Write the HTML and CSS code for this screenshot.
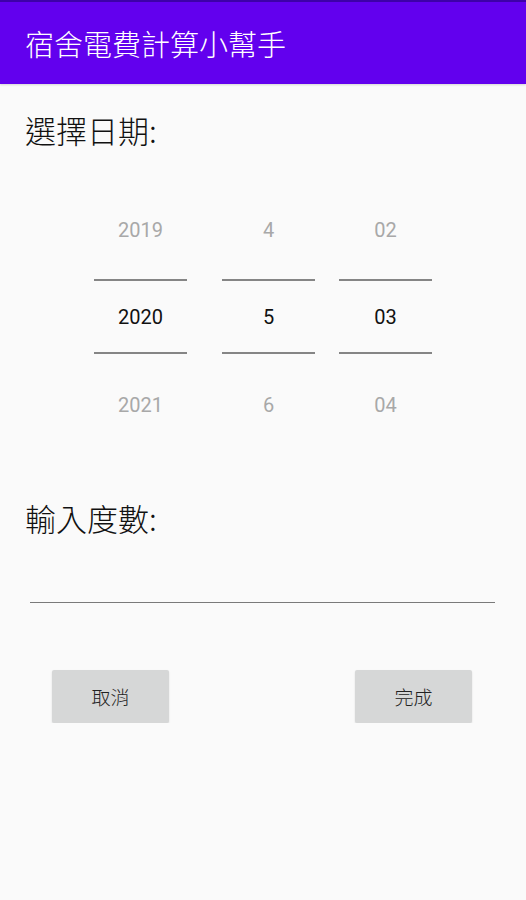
FILE: index.html
```html
<!DOCTYPE html>
<html lang="zh-Hant">
  <head>
    <meta charset="UTF-8" />
    <meta name="viewport" content="width=device-width, initial-scale=1.0" />
    <title>宿舍電費計算小幫手</title>
    <link rel="stylesheet" href="styles.css">
  </head>
  <body>
    <header class="appBar">
      <h1 class="appTitle">宿舍電費計算小幫手</h1>
    </header>

    <main class="content">
      <p class="label">選擇日期:</p>

      <div class="picker">
        <div class="pickerCol colYear">
          <div class="num">2019</div>
          <div class="divider"></div>
          <div class="num selected">2020</div>
          <div class="divider"></div>
          <div class="num last">2021</div>
        </div>
        <div class="pickerCol colMonth">
          <div class="num">4</div>
          <div class="divider"></div>
          <div class="num selected">5</div>
          <div class="divider"></div>
          <div class="num last">6</div>
        </div>
        <div class="pickerCol colDay">
          <div class="num">02</div>
          <div class="divider"></div>
          <div class="num selected">03</div>
          <div class="divider"></div>
          <div class="num last">04</div>
        </div>
      </div>

      <p class="label labelInput">輸入度數:</p>
      <div class="inputLine"></div>

      <div class="buttons">
        <button class="btn">取消</button>
        <button class="btn">完成</button>
      </div>
    </main>
  </body>
</html>
```

FILE: styles.css
```css
body {
  margin: 0;
  background-color: #fafafa;
  font-family: "Noto Sans CJK TC", "Noto Sans", sans-serif;
  color: #1e1e1e;
}

.appBar {
  height: 82px;
  border-top: 2px solid #3d00a8;
  background-color: #6200ee;
  display: flex;
  align-items: center;
  padding-left: 25px;
  box-shadow: 0 1px 2px rgba(0, 0, 0, 0.15);
}

.appTitle {
  margin: 0;
  font-size: 29px;
  font-weight: 300;
  color: #fff;
  line-height: 1;
}

.label {
  margin: 26px 0 0 25px;
  font-size: 31px;
  font-weight: 300;
  line-height: 40px;
  color: #111;
}

.picker {
  display: flex;
  margin-top: 60px;
  padding-left: 94px;
}

.pickerCol {
  width: 93px;
  display: flex;
  flex-direction: column;
  align-items: stretch;
}

.colMonth {
  margin-left: 35px;
}

.colDay {
  margin-left: 24px;
}

.num {
  height: 40px;
  line-height: 40px;
  text-align: center;
  font-family: Roboto, sans-serif;
  font-size: 20px;
  color: #a8a8a8;
}

.divider {
  height: 2px;
  background-color: #858585;
  margin-top: 29px;
}

.num.selected {
  height: 71px;
  line-height: 73px;
  color: #111;
}

.selected + .divider {
  margin-top: 0;
}

.num.last {
  margin-top: 31px;
}

.labelInput {
  margin-top: 73px;
}

.inputLine {
  margin: 64px 31px 0 30px;
  height: 1px;
  background-color: #7a7a7a;
}

.buttons {
  display: flex;
  justify-content: space-between;
  margin: 67px 54px 0 52px;
}

.btn {
  width: 117px;
  height: 53px;
  border: none;
  border-radius: 2px;
  background-color: #d6d7d7;
  box-shadow: 0 1px 2px rgba(0, 0, 0, 0.12);
  font-family: "Noto Sans CJK TC", sans-serif;
  font-size: 19px;
  font-weight: 300;
  color: #222;
}
```
